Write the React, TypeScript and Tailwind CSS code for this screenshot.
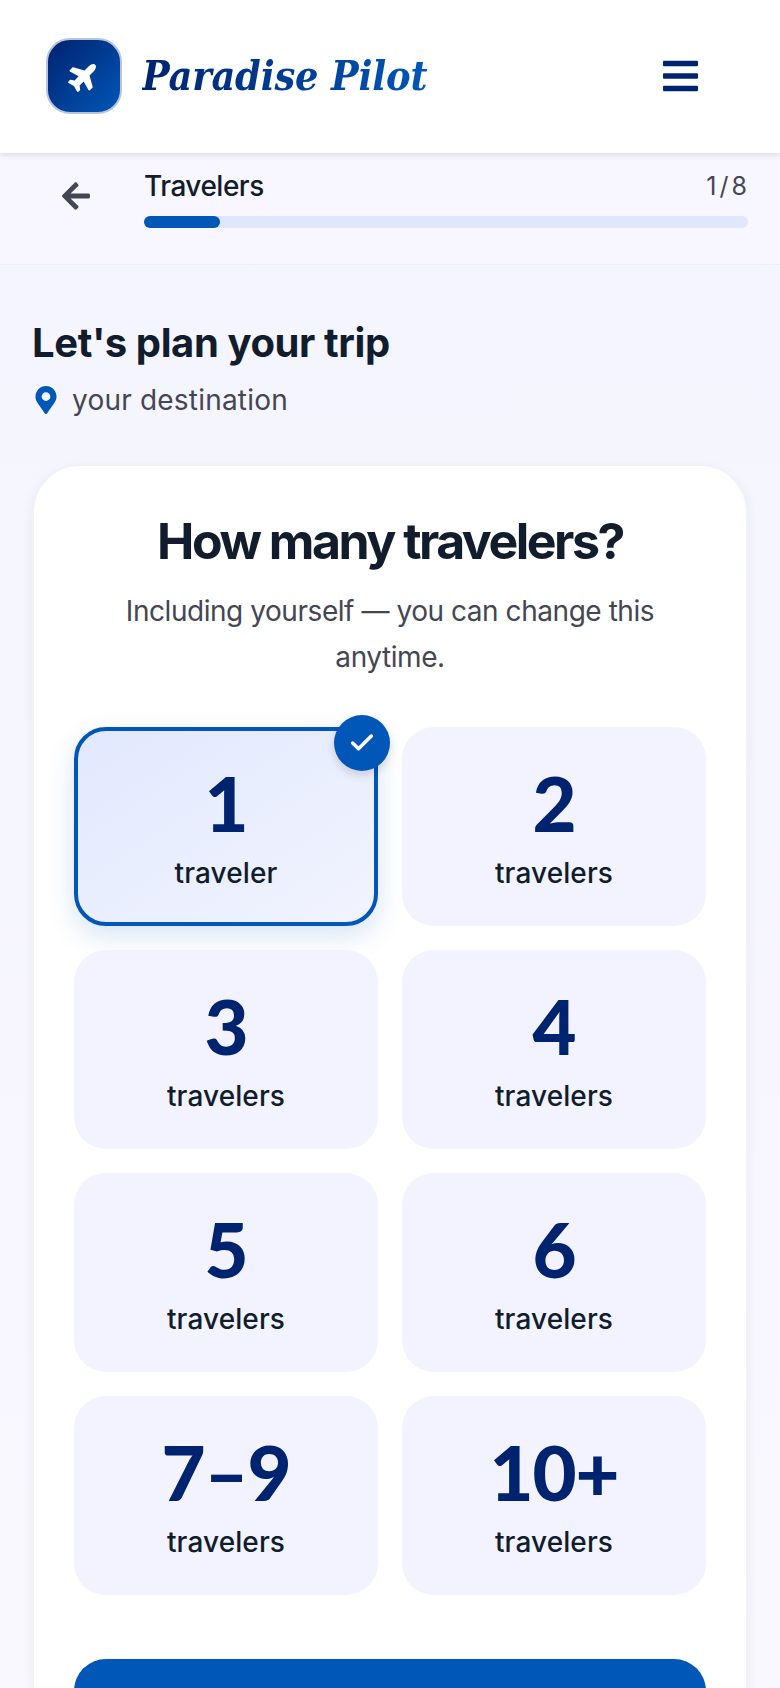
import { Check } from 'lucide-react';
import { FaArrowLeft, FaBars, FaMapMarkerAlt, FaPlane } from 'react-icons/fa';

const options = [
  { value: '1', label: 'traveler', selected: true },
  { value: '2', label: 'travelers' },
  { value: '3', label: 'travelers' },
  { value: '4', label: 'travelers' },
  { value: '5', label: 'travelers' },
  { value: '6', label: 'travelers' },
  { value: '7–9', label: 'travelers' },
  { value: '10+', label: 'travelers' },
];

function OptionTile({ value, label, selected }: { value: string; label: string; selected?: boolean }) {
  return (
    <button
      className={
        selected
          ? 'relative flex h-[199px] flex-col items-center rounded-[32px] border-4 border-[#0057b8] bg-gradient-to-br from-[#e2e8fe] to-[#f1f4fe] pt-[27px] shadow-[0_10px_28px_rgba(0,87,184,0.16)]'
          : 'relative flex h-[199px] flex-col items-center rounded-[32px] border-4 border-transparent bg-[#f2f3fe] pt-[27px]'
      }
    >
      <span className="font-['Lato',sans-serif] text-[76px] font-black leading-[90px] tracking-[-1px] text-[#00236f]">{value}</span>
      <span className="mt-[7px] text-[28px] font-medium leading-[36px] tracking-[0.1px] text-[#111c2d]">{label}</span>
      {selected && (
        <span className="absolute -right-[16px] -top-[16px] flex h-[56px] w-[56px] items-center justify-center rounded-full bg-[#0057b8] shadow-[0_4px_10px_rgba(0,0,0,0.15)]">
          <Check className="h-[28px] w-[28px] text-white" strokeWidth={3} />
        </span>
      )}
    </button>
  );
}

export default function App() {
  return (
    <div className="h-[1688px] overflow-hidden bg-gradient-to-b from-[#f4f4fe] to-[#f9f8ff] font-['Inter',sans-serif]">
      <header className="relative z-10 flex h-[153px] items-center justify-between bg-white pb-[2px] pl-[46px] pr-[82px] shadow-[0_2px_6px_rgba(17,28,45,0.12)]">
        <div className="flex items-center gap-[20px]">
          <div className="flex h-[76px] w-[76px] items-center justify-center rounded-[24px] border-2 border-[#b9c3dc] bg-gradient-to-br from-[#00236f] to-[#0057b8]">
            <FaPlane className="h-[32px] w-[32px] -rotate-45 text-white" />
          </div>
          <span className="bg-gradient-to-r from-[#00236f] to-[#0057b8] bg-clip-text font-['DejaVu_Serif',serif] text-[41px] font-bold italic leading-[48px] tracking-[-0.2px] text-transparent font-stretch-condensed">
            Paradise Pilot
          </span>
        </div>
        <FaBars className="h-[40px] w-[35px] text-[#00236f]" />
      </header>

      <div className="flex h-[112px] border-b border-[#eeeef8] bg-[#f8f7ff] pr-[32px]">
        <div className="flex w-[144px] justify-center pl-[8px] pt-[27px]">
          <FaArrowLeft className="h-[32px] w-[30px] text-[#444653]" />
        </div>
        <div className="flex-1 pt-[15px]">
          <div className="flex items-center justify-between">
            <span className="text-[28px] font-medium leading-[36px] tracking-[-0.5px] text-[#111c2d]">Travelers</span>
            <span className="-mr-[2px] text-[25px] leading-[36px] tracking-[3px] text-[#444653]">1/8</span>
          </div>
          <div className="mt-[12px] h-[12px] rounded-full bg-[#e0e6fb]">
            <div className="h-full w-[12.5%] rounded-full bg-[#0057b8]" />
          </div>
        </div>
      </div>

      <main className="px-[32px] pt-[54px]">
        <h1 className="text-[40px] font-bold leading-[48px] tracking-[-0.4px] text-[#111c2d]">Let's plan your trip</h1>
        <div className="mt-[13px] flex items-center gap-[15px] pl-[3px] text-[#444653]">
          <FaMapMarkerAlt className="h-[28px] w-[22px] text-[#0057b8]" />
          <span className="text-[28px] leading-[40px] tracking-[0.2px]">your destination</span>
        </div>

        <section className="mt-[44px] rounded-[48px] border-2 border-[#f1f1fa] bg-white px-[40px] pt-[43px] pb-[60px] shadow-[0_4px_12px_rgba(17,28,45,0.06)]">
          <h2 className="text-center text-[50px] font-bold leading-[64px] tracking-[-2.5px] text-[#111c2d]">How many travelers?</h2>
          <p className="mx-auto mt-[15px] max-w-[560px] text-center text-[28px] leading-[46px] tracking-[-0.45px] text-[#444653]">
            Including yourself — you can change this anytime.
          </p>
          <div className="mt-[47px] grid grid-cols-2 gap-[24px]">
            {options.map((o) => (
              <OptionTile key={o.value} value={o.value} label={o.label} selected={o.selected} />
            ))}
          </div>
          <div className="mt-[64px] h-[120px] rounded-[32px] bg-[#0057b8]" />
        </section>
      </main>
    </div>
  );
}
